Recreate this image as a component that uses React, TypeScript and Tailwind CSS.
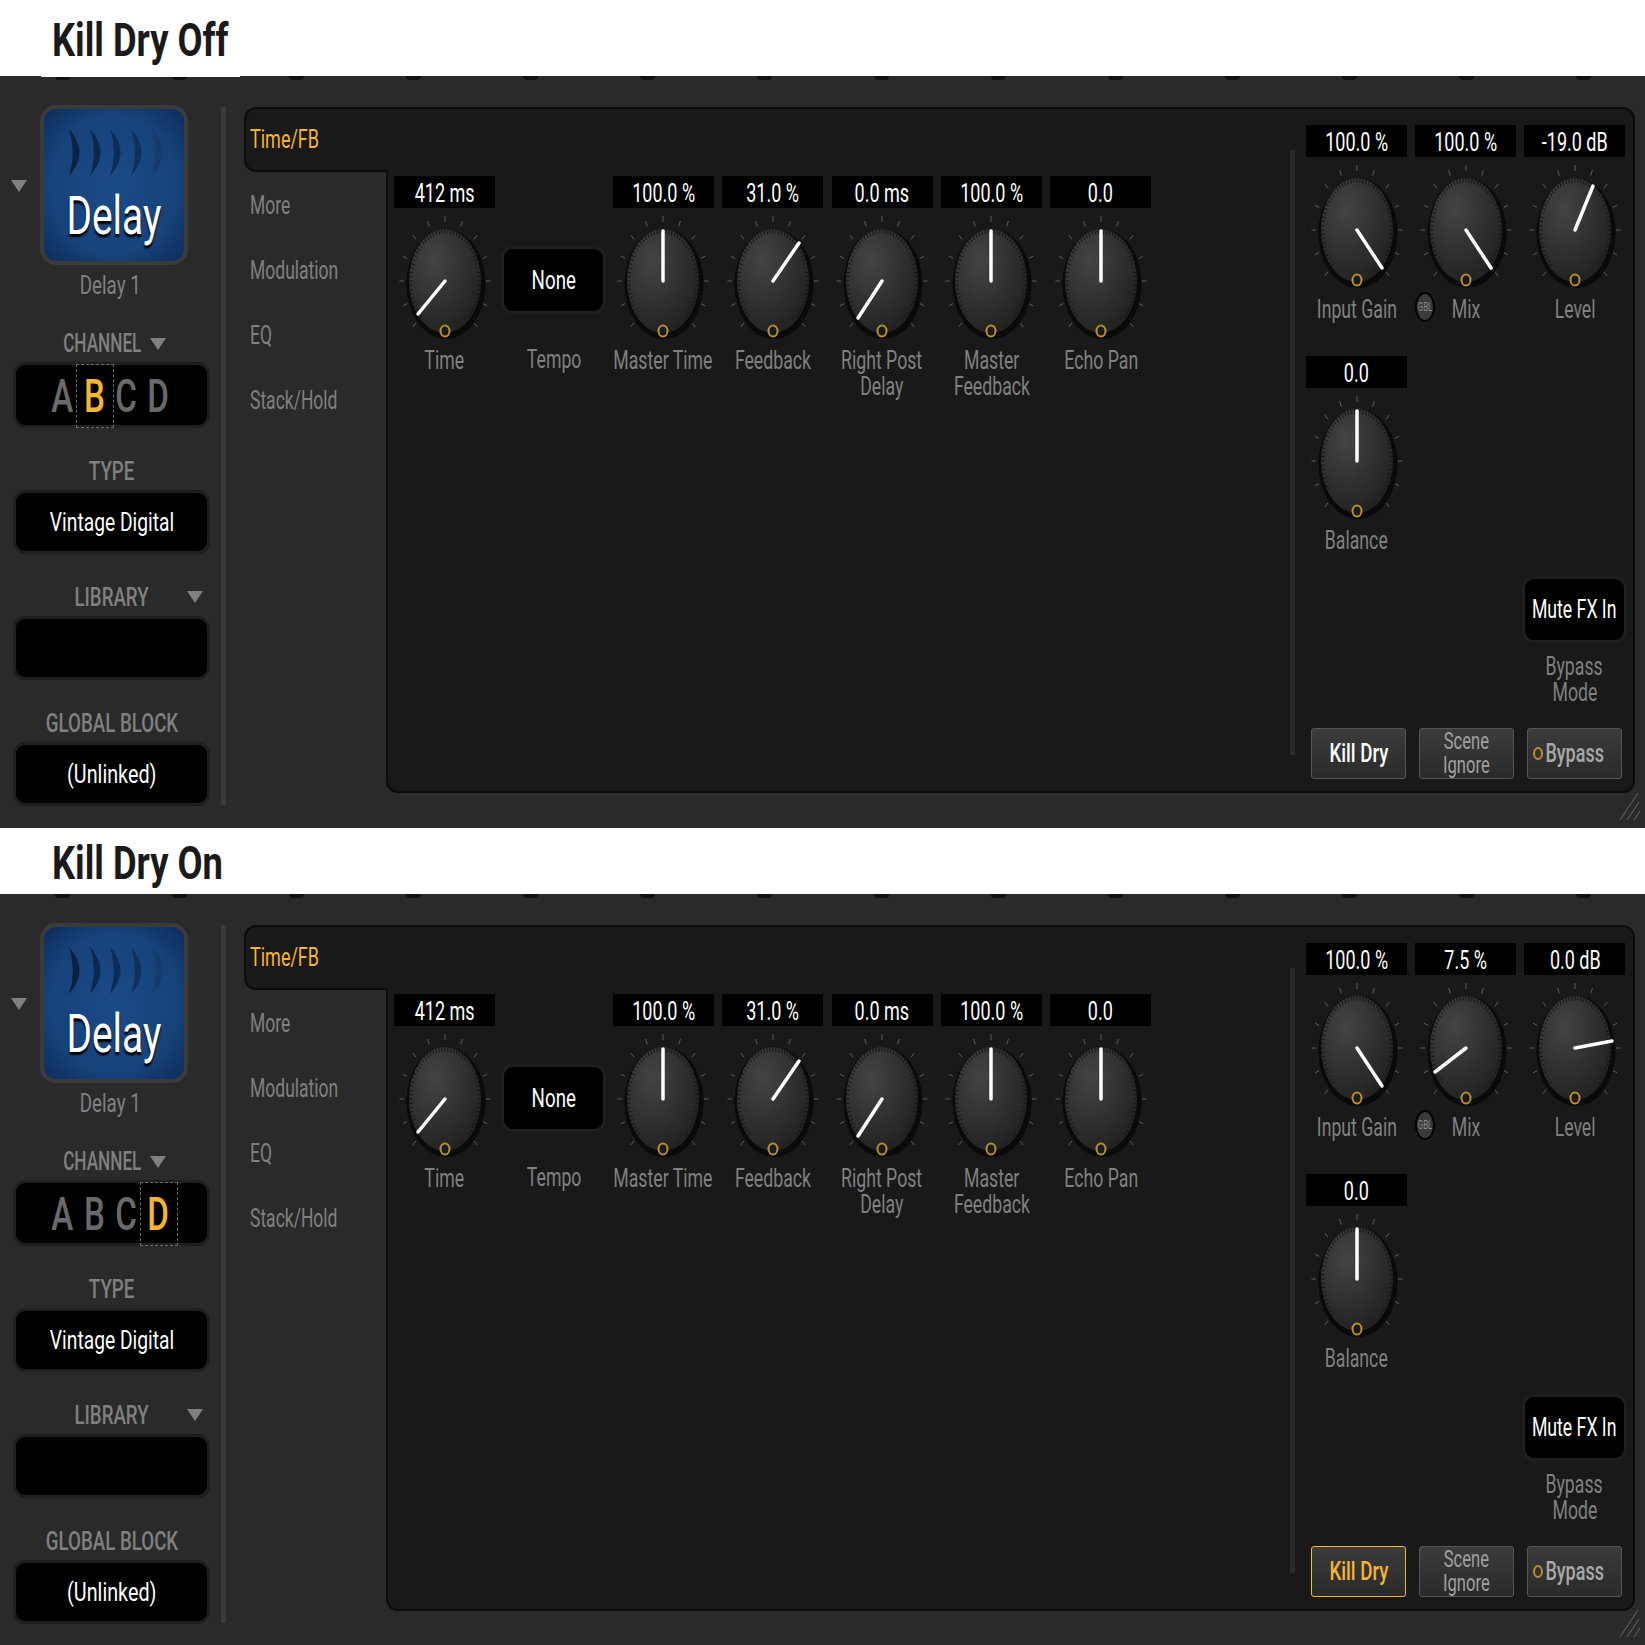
import type { ReactNode } from "react";

const MARKS = Array.from({ length: 14 }, (_, i) => i);
const TICKS = Array.from({ length: 13 }, (_, i) => ((-135 + i * 22.5) * Math.PI) / 180);
const RIM = Array.from({ length: 55 }, (_, i) => ((-135 + (i * 270) / 54) * Math.PI) / 180);

function Tx({ children, className = "", sx = "scale-x-[.72]" }: { children: ReactNode; className?: string; sx?: string }) {
  return <span className={"inline-block shrink-0 whitespace-nowrap " + sx + " " + className}>{children}</span>;
}

function Tri({ className = "" }: { className?: string }) {
  return (
    <svg width="16" height="12" viewBox="0 0 16 12" className={"shrink-0 " + className}>
      <path d="M0 0H16L8 12Z" fill="#808080" />
    </svg>
  );
}

function Knob({ x, y, id, className = "mt-[7px]" }: { x: number; y: number; id: string; className?: string }) {
  return (
    <svg width="110" height="132" viewBox="-55 -66 110 132" className={"shrink-0 " + className}>
      <defs>
        <radialGradient id={id} cx="35%" cy="30%" r="80%">
          <stop offset="0%" stopColor="#444444" />
          <stop offset="100%" stopColor="#1f1f1f" />
        </radialGradient>
      </defs>
      {TICKS.map((a, i) => (
        <line
          key={i}
          x1={Math.sin(a) * 41}
          y1={-Math.cos(a) * 59}
          x2={Math.sin(a) * 45.5}
          y2={-Math.cos(a) * 65}
          stroke="#5c5c5c"
          strokeWidth="1"
        />
      ))}
      <ellipse cx="1" cy="3" rx="39.5" ry="55" fill="#0a0a0a" />
      <ellipse cx="0" cy="0" rx="36" ry="52" fill={`url(#${id})`} />
      {RIM.map((a, i) => (
        <line
          key={i}
          x1={Math.sin(a) * 32.5}
          y1={-Math.cos(a) * 47.5}
          x2={Math.sin(a) * 36}
          y2={-Math.cos(a) * 52}
          stroke="#141414"
          strokeWidth="1"
        />
      ))}
      <line x1="0" y1="0" x2={x} y2={y} stroke="#ffffff" strokeWidth="3.5" strokeLinecap="round" />
      <ellipse cx="0" cy="50" rx="4.5" ry="5.5" fill="#1a1a1a" stroke="#b8902e" strokeWidth="2" />
    </svg>
  );
}

function Label({ lines, children }: { lines: string[]; children?: ReactNode }) {
  return (
    <div className="relative flex flex-col items-center text-[26px] leading-[26px] text-[#808080]">
      {lines.map((l) => (
        <div key={l} className="flex justify-center">
          <Tx sx="scale-x-[.68]">{l}</Tx>
        </div>
      ))}
      {children}
    </div>
  );
}

function Param({ id, value, x, y, lines, knobClass, children }: { id: string; value: string; x: number; y: number; lines: string[]; knobClass?: string; children?: ReactNode }) {
  return (
    <div className="flex w-[101px] flex-col items-center">
      <div className="flex h-8 w-full items-center justify-center bg-black pt-[3px] text-[25px] leading-none text-white">
        <Tx>{value}</Tx>
      </div>
      <Knob id={id} x={x} y={y} className={knobClass} />
      <div className="w-full">
        <Label lines={lines}>{children}</Label>
      </div>
    </div>
  );
}

function SelectBox({ children, className = "" }: { children?: ReactNode; className?: string }) {
  return (
    <div className={"flex items-center justify-center rounded-xl border-[3px] border-[#1f1f1f] bg-black text-[26px] text-white " + className}>
      {children}
    </div>
  );
}

function SideLabel({ text, tri }: { text: string; tri?: string }) {
  return (
    <div className="relative flex h-[38px] items-center justify-center text-[26px] font-medium text-[#808080]">
      <Tx>{text}</Tx>
      {tri && <Tri className={tri} />}
    </div>
  );
}

function Letter({ l, active }: { l: string; active: boolean }) {
  return (
    <div className={"relative flex h-full w-8 items-center justify-center pt-[3px] text-[46px] font-medium " + (active ? "text-[#f5b52e]" : "text-[#6a6a6a]")}>
      <Tx>{l}</Tx>
      {active && <div className="absolute -inset-x-[3px] -top-[1px] -bottom-[3px] border border-dashed border-[#6a6a6a]" />}
    </div>
  );
}

function Sidebar({ channel }: { channel: string }) {
  return (
    <div className="flex w-[221px] shrink-0 flex-col">
      <div className="flex h-40 items-center pl-[11px]">
        <Tri className="mt-[2px]" />
        <div className="ml-[13px] flex h-40 w-[148px] flex-col items-center overflow-hidden rounded-2xl border-[4px] border-[#3b3b3b] bg-[radial-gradient(ellipse_at_center,#1b4b88_0%,#17427a_65%,#0d2d58_100%)]">
          <svg width="100" height="47" viewBox="0 0 100 47" className="mt-[20px] shrink-0">
            {[
              [5, "#0a2242"],
              [26, "#0c2850"],
              [46, "#0e2c56"],
              [67, "#113260"],
              [88, "#153c6c"],
            ].map(([px, c]) => (
              <path key={px as number} d={`M${px} 0C${(px as number) + 14} 16 ${(px as number) + 14} 31 ${px} 47C${(px as number) + 5} 31 ${(px as number) + 5} 16 ${px} 0Z`} fill={c as string} />
            ))}
          </svg>
          <div className="mt-[10px] flex justify-center text-[54px] leading-[60px] text-white [text-shadow:0_3px_2px_#000]">
            <Tx>Delay</Tx>
          </div>
        </div>
      </div>
      <div className="flex h-10 items-center justify-center text-[26px] text-[#808080]">
        <Tx>Delay 1</Tx>
      </div>
      <div className="mt-[17px] ml-[13px] w-[197px]">
        <div className="flex h-10 items-center pt-[3px] pl-[50px] text-[26px] font-medium text-[#808080]">
          <div className="flex w-[78px] justify-center">
            <Tx sx="scale-x-[.66]">CHANNEL</Tx>
          </div>
          <Tri className="ml-[9px]" />
        </div>
        <SelectBox className="h-[66px]">
          <div className="-ml-[2px] flex h-full">
            {["A", "B", "C", "D"].map((l) => (
              <Letter key={l} l={l} active={l === channel} />
            ))}
          </div>
        </SelectBox>
        <div className="mt-6">
          <SideLabel text="TYPE" />
          <SelectBox className="h-16">
            <Tx sx="scale-x-[.74]">Vintage Digital</Tx>
          </SelectBox>
        </div>
        <div className="mt-6">
          <SideLabel text="LIBRARY" tri="absolute right-[7px] top-[13px]" />
          <SelectBox className="h-16" />
        </div>
        <div className="mt-6">
          <SideLabel text="GLOBAL BLOCK" />
          <SelectBox className="h-16">
            <Tx sx="scale-x-[.76]">(Unlinked)</Tx>
          </SelectBox>
        </div>
      </div>
    </div>
  );
}

function FootButton({ children, on }: { children: ReactNode; on?: boolean }) {
  return (
    <div
      className={
        "flex h-[51px] w-[95px] flex-col items-center justify-center rounded-[3px] border bg-gradient-to-b from-[#3c3c3c] to-[#2a2a2a] " +
        (on ? "border-[#f5b52e]" : "border-[#555555]")
      }
    >
      {children}
    </div>
  );
}

function Rail() {
  return (
    <div className="flex w-[142px] shrink-0 flex-col">
      <div className="relative z-10 flex h-[65px] w-[144px] shrink-0 items-center rounded-l-xl border-y-2 border-l-2 border-[#0c0c0c] bg-[#191919] pl-[4px] text-[25px] text-[#f5b52e]">
        <Tx className="origin-left">Time/FB</Tx>
      </div>
      <div className="flex flex-1 flex-col pl-[6px] text-[25px] text-[#808080]">
        {["More", "Modulation", "EQ", "Stack/Hold"].map((t) => (
          <div key={t} className="flex h-[65px] items-center pt-[2px]">
            <Tx sx="scale-x-[.7]" className="origin-left">{t}</Tx>
          </div>
        ))}
      </div>
    </div>
  );
}

function Panel({ pfx, on, mix, level, channel }: { pfx: string; on: boolean; mix: { v: string; x: number; y: number }; level: { v: string; x: number; y: number }; channel: string }) {
  return (
    <div className="relative flex-1 bg-[#2a2a2a]">
      {!on && <div className="absolute top-0 left-[41px] h-px w-[199px] bg-white" />}
      <div className="flex h-1 gap-[102px] pl-[55px]">
        {MARKS.map((m) => (
          <div key={m} className="h-1 w-[15px] shrink-0 rounded-b-sm bg-[#111111]" />
        ))}
      </div>
      <div className="flex pt-[25px]">
        <Sidebar channel={channel} />
        <div className="mt-[2px] h-[698px] w-[5px] shrink-0 bg-[#3a3a3a]" />
        <div className="mt-[2px] ml-[18px] flex h-[686px] w-[1391px] shrink-0">
          <Rail />
          <div className="flex flex-1 rounded-r-xl rounded-bl-xl border-y-2 border-r-2 border-l-2 border-[#0c0c0c] bg-[#191919]">
            <div className="flex w-[902px] shrink-0 gap-[8.4px] pt-[67px] pl-[6px]">
              <Param id={pfx + "a"} value="412 ms" x={-27} y={33} lines={["Time"]} />
              <div className="flex w-[101px] flex-col items-center">
                <SelectBox className="mt-[70px] h-[68px] w-[105px] shrink-0">
                  <Tx>None</Tx>
                </SelectBox>
                <div className="mt-[32px] w-full">
                  <Label lines={["Tempo"]} />
                </div>
              </div>
              <Param id={pfx + "b"} value="100.0 %" x={0} y={-50} lines={["Master Time"]} />
              <Param id={pfx + "c"} value="31.0 %" x={26} y={-38} lines={["Feedback"]} />
              <Param id={pfx + "d"} value="0.0 ms" x={-24} y={37} lines={["Right Post", "Delay"]} />
              <Param id={pfx + "e"} value="100.0 %" x={0} y={-50} lines={["Master", "Feedback"]} />
              <Param id={pfx + "f"} value="0.0" x={0} y={-50} lines={["Echo Pan"]} />
            </div>
            <div className="mt-[41px] h-[605px] w-[5px] shrink-0 bg-[#2a2a2a]" />
            <div className="flex flex-col pt-4 pl-[11px]">
              <div className="flex gap-[8.2px]">
                <Param id={pfx + "g"} value="100.0 %" x={25} y={38} lines={["Input Gain"]} />
                <Param id={pfx + "h"} value={mix.v} x={mix.x} y={mix.y} lines={["Mix"]}>
                  <div className="absolute left-[0px] -top-[4px] flex h-[30px] w-[20px] items-center justify-center rounded-[50%] border-2 border-black bg-[#3a3a3a] text-[12px] text-[#8a8a8a]">
                    <Tx sx="scale-x-[.65]">GBL</Tx>
                  </div>
                </Param>
                <Param id={pfx + "i"} value={level.v} x={level.x} y={level.y} lines={["Level"]} />
              </div>
              <div className="mt-[34px]">
                <Param id={pfx + "j"} value="0.0" x={0} y={-50} lines={["Balance"]} />
              </div>
              <div className="mt-[23px] ml-[216px] flex w-[105px] flex-col">
                <SelectBox className="h-[67px] w-[105px]">
                  <Tx sx="scale-x-[.68]">Mute FX In</Tx>
                </SelectBox>
                <div className="mt-[10px]">
                  <Label lines={["Bypass", "Mode"]} />
                </div>
              </div>
              <div className="mt-[23px] ml-[5px] flex gap-[13px]">
                <FootButton on={on}>
                  <div className={"text-[26px] font-medium " + (on ? "text-[#f5b52e]" : "text-white")}>
                    <Tx>Kill Dry</Tx>
                  </div>
                </FootButton>
                <FootButton>
                  <div className="flex flex-col items-center text-[23px] leading-[24px] text-[#a0a0a0]">
                    <Tx>Scene</Tx>
                    <Tx>Ignore</Tx>
                  </div>
                </FootButton>
                <FootButton>
                  <div className="-ml-[12px] flex items-center justify-center gap-[3px] text-[25px] font-medium text-[#a8a8a8]">
                    <span className="h-[13px] w-[10px] shrink-0 rounded-[50%] border-2 border-[#b8902e]" />
                    <div className="flex w-[58px] justify-center">
                      <Tx>Bypass</Tx>
                    </div>
                  </div>
                </FootButton>
              </div>
            </div>
          </div>
        </div>
      </div>
      <svg width="20" height="27" viewBox="0 0 20 27" className="absolute right-[5px] bottom-[8px]">
        <path d="M0 27L18 0M7 27L19 9M14 27L20 18" stroke="#666666" strokeWidth="1" fill="none" />
      </svg>
    </div>
  );
}

function Section({ title, tall, children }: { title: string; tall?: boolean; children: ReactNode }) {
  return (
    <>
      <div className={"flex items-center pt-[4px] pl-[52px] text-[46px] font-bold text-[#1a1a1a] " + (tall ? "h-[76px]" : "h-[66px]")}>
        <Tx sx="scale-x-[.79]" className="origin-left">{title}</Tx>
      </div>
      <div className={"flex " + (tall ? "h-[752px]" : "h-[751px]")}>{children}</div>
    </>
  );
}

export default function App() {
  return (
    <div className="h-[1645px] w-[1645px] overflow-hidden bg-white font-['Roboto',sans-serif]">
      <Section title="Kill Dry Off" tall>
        <Panel pfx="off" on={false} channel="B" mix={{ v: "100.0 %", x: 25, y: 38 }} level={{ v: "-19.0 dB", x: 18, y: -44 }} />
      </Section>
      <Section title="Kill Dry On">
        <Panel pfx="on" on channel="D" mix={{ v: "7.5 %", x: -31, y: 24 }} level={{ v: "0.0 dB", x: 37, y: -7 }} />
      </Section>
    </div>
  );
}
